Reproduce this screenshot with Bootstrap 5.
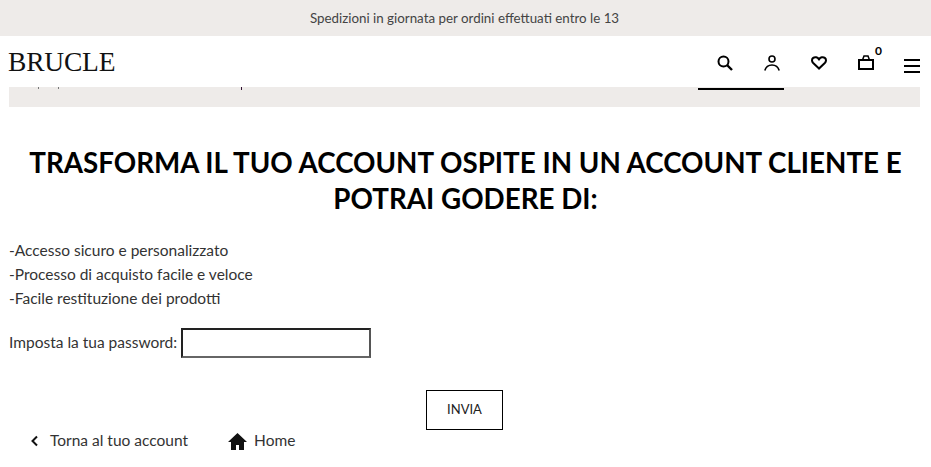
<!DOCTYPE html>
<html lang="it">
<head>
    <meta charset="UTF-8">
    <title>Brucle</title>
    <link rel="stylesheet" href="https://cdn.jsdelivr.net/npm/bootstrap@5.3.3/dist/css/bootstrap.min.css">
    <style>
        body {
            font-family: Lato, "Noto Sans", sans-serif;
            font-size: 15.500px;
            font-weight: 400;
            color: #333;
            background: #fff;
            overflow: hidden;
        }
        .promo-bar {
            height: 36px;
            padding-right: 2px;
            background: #eeebe9;
            font-size: 13.350px;
            color: #444;
        }
        .site-head {
            height: 51px;
            padding-left: 8px;
            padding-right: 11px;
            background: #fff;
            position: relative;
            z-index: 2;
        }
        .site-logo {
            font-family: "Liberation Serif", serif;
            font-size: 27.500px;
            line-height: 1;
            color: #111;
            letter-spacing: -0.2px;
        }
        .head-ico {
            position: relative;
            width: 47px;
            height: 24px;
            margin-top: 2px;
            color: #000;
        }
        .head-ico.last-ico {
            width: 16px;
            margin-left: 15px;
            margin-top: 9px;
        }
        .cart-count {
            position: absolute;
            top: -6px;
            left: 33px;
            font-size: 12px;
            font-weight: 700;
            line-height: 1;
            color: #000;
        }
        .notice-band {
            height: 20px;
            margin: 0 11px 0 9px;
            background: #eeebe9;
            position: relative;
        }
        .band-link {
            position: absolute;
            left: 689px;
            top: 1px;
            width: 86px;
            height: 1.500px;
            background: #000;
        }
        .clip-mark {
            position: absolute;
            top: 0;
            width: 1px;
            height: 2px;
            background: #777;
        }
        .mark-one { left: 29px; }
        .mark-two { left: 49px; }
        .mark-three { left: 232px; height: 3px; background: #301030; }
        .main-wrap {
            padding: 0 9px;
        }
        .page-title {
            margin: 38px 0 0;
            font-size: 27.760px;
            font-weight: 700;
            line-height: 36px;
            color: #000;
            text-align: center;
        }
        .perk-list {
            margin-top: 21px;
            line-height: 24px;
        }
        .pass-row {
            margin-top: 18px;
            gap: 4px;
        }
        .pass-input {
            width: 190px;
            height: 30px;
            border: 2px solid;
            border-color: #222 #555 #666 #222;
            background: #fff;
        }
        .send-btn {
            width: 77px;
            height: 40px;
            border: 1px solid #000;
            border-radius: 0;
            background: #fff;
            font-size: 13px;
            color: #222;
            padding: 0;
        }
        .send-row {
            margin-top: 32px;
            padding-right: 2px;
        }
        .back-links {
            padding-left: 21px;
            height: 20px;
            margin-top: 1px;
        }
        .back-label {
            margin-left: 11px;
            margin-right: 40px;
        }
        .home-label {
            margin-left: 7px;
        }
    </style>
</head>
<body>
    <div class="promo-bar d-flex align-items-center justify-content-center">Spedizioni in giornata per ordini effettuati entro le 13</div>

    <header class="site-head d-flex align-items-center justify-content-between">
        <div class="site-logo">BRUCLE</div>
        <div class="d-flex align-items-center">
            <div class="head-ico d-flex justify-content-center align-items-center">
                <svg width="16" height="16" viewBox="0 0 16 16" fill="none" stroke="currentColor" stroke-width="2"><circle cx="6.500" cy="6.500" r="5"/><path d="M10 10l5 5" stroke-width="2.400"/></svg>
            </div>
            <div class="head-ico d-flex justify-content-center align-items-center">
                <svg width="16" height="16" viewBox="0 0 16 16" fill="none" stroke="currentColor" stroke-width="1.600"><circle cx="8" cy="4" r="3"/><path d="M.8 15.500C2 11.500 5 10 8 10s6 1.500 7.200 5.500"/></svg>
            </div>
            <div class="head-ico d-flex justify-content-center align-items-center">
                <svg width="16" height="14" viewBox="0 0 16 14" fill="none" stroke="currentColor" stroke-width="2"><path d="M8 12.500 2.200 7C.5 5.300.7 3 2.200 1.900 4 .6 6.500 1.200 8 3.300 9.500 1.200 12 .6 13.800 1.900 15.300 3 15.500 5.300 13.800 7z"/></svg>
            </div>
            <div class="head-ico d-flex justify-content-center align-items-center">
                <svg width="16" height="15" viewBox="0 0 16 15" fill="none" stroke="currentColor" stroke-width="2"><rect x="1" y="5" width="14" height="9"/><path d="M4.500 5 6 1h4l1.500 4" stroke-width="1.500"/></svg>
                <span class="cart-count">0</span>
            </div>
            <div class="head-ico last-ico d-flex justify-content-center align-items-center">
                <svg width="16" height="14" viewBox="0 0 16 14" fill="currentColor"><rect y="0" width="16" height="2"/><rect y="6" width="16" height="2"/><rect y="12" width="16" height="2"/></svg>
            </div>
        </div>
    </header>

    <div class="notice-band">
        <span class="clip-mark mark-one"></span>
        <span class="clip-mark mark-two"></span>
        <span class="clip-mark mark-three"></span>
        <span class="band-link"></span>
    </div>

    <main class="main-wrap">
        <h1 class="page-title">TRASFORMA IL TUO ACCOUNT OSPITE IN UN ACCOUNT CLIENTE E POTRAI GODERE DI:</h1>
        <div class="perk-list">
            <div>-Accesso sicuro e personalizzato</div>
            <div>-Processo di acquisto facile e veloce</div>
            <div>-Facile restituzione dei prodotti</div>
        </div>
        <div class="pass-row d-flex align-items-center">
            <label for="pw">Imposta la tua password:</label>
            <input id="pw" class="pass-input" type="password">
        </div>
        <div class="send-row d-flex justify-content-center">
            <button type="button" class="btn send-btn">INVIA</button>
        </div>
        <div class="back-links d-flex align-items-center">
            <svg width="9" height="12" viewBox="0 0 9 12" fill="none" stroke="#111" stroke-width="2"><path d="M7 1.500 2.500 6 7 10.500"/></svg>
            <span class="back-label">Torna al tuo account</span>
            <svg width="19" height="17" viewBox="0 0 19 17" fill="#111"><path d="M9.500 0 0 9h3v8h5v-5h3v5h5V9h3z"/></svg>
            <span class="home-label">Home</span>
        </div>
    </main>
</body>
</html>
